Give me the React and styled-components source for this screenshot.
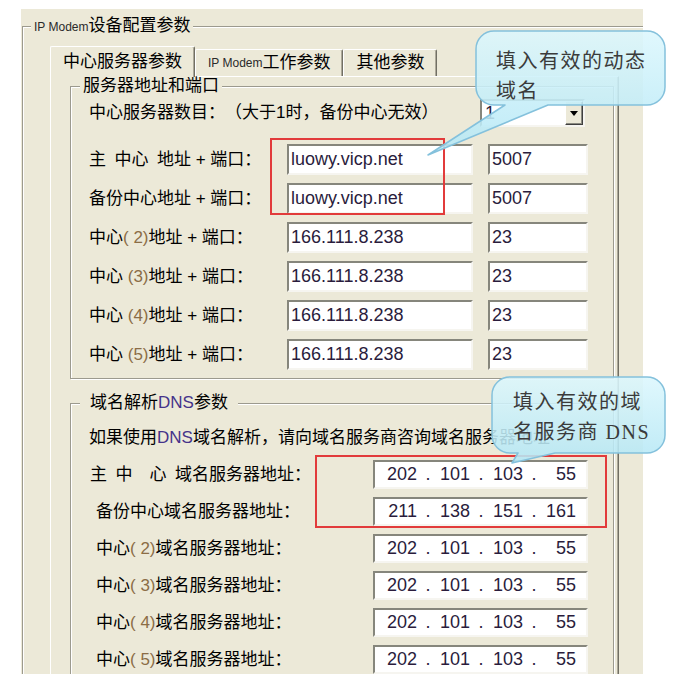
import React from "react";
import styled, { createGlobalStyle } from "styled-components";

const GlobalStyle = createGlobalStyle`
  html, body {
    margin: 0;
    padding: 0;
    background: #ffffff;
  }
  body {
    font-family: "Liberation Sans", "Noto Sans CJK SC", sans-serif;
    color: #000;
    text-spacing-trim: space-all;
  }
  * {
    box-sizing: border-box;
  }
`;

function Callout({ x, y, w, h, pl, pt, path, id, children }) {
  return (
    <Bubble $x={x} $y={y} $w={w} $h={h} $pl={pl} $pt={pt}>
      <svg width={w} height={h}>
        <defs>
          <linearGradient id={id} x1="0" y1="0" x2="0" y2="1">
            <stop offset="0" stopColor="#dcf7fd" />
            <stop offset="1" stopColor="#b4e7f5" />
          </linearGradient>
        </defs>
        <path
          d={path}
          fill={`url(#${id})`}
          fillOpacity="0.88"
          stroke="#84c1dc"
          strokeWidth="1.5"
          strokeLinejoin="round"
        />
      </svg>
      <BubbleText>{children}</BubbleText>
    </Bubble>
  );
}

export default function App() {
  const servers = [
    { label: <>主{"\u2002"}中心{"\u2002"}地址 + 端口：</>, host: "luowy.vicp.net", port: "5007" },
    { label: <>备份中心地址 + 端口：</>, host: "luowy.vicp.net", port: "5007" },
    { label: <>中心<Num>( 2)</Num>地址 + 端口：</>, host: "166.111.8.238", port: "23" },
    { label: <>中心 <Num>(3)</Num>地址 + 端口：</>, host: "166.111.8.238", port: "23" },
    { label: <>中心 <Num>(4)</Num>地址 + 端口：</>, host: "166.111.8.238", port: "23" },
    { label: <>中心 <Num>(5)</Num>地址 + 端口：</>, host: "166.111.8.238", port: "23" },
  ];

  const dnsRows = [
    { label: <>主{"\u2002"}中{"\u2003"}心{"\u2002"}域名服务器地址：</>, ip: ["202", "101", "103", "55"], indent: 1 },
    { label: <>备份中心域名服务器地址：</>, ip: ["211", "138", "151", "161"], indent: 7 },
    { label: <>中心<Num>( 2)</Num>域名服务器地址：</>, ip: ["202", "101", "103", "55"], indent: 7 },
    { label: <>中心<Num>( 3)</Num>域名服务器地址：</>, ip: ["202", "101", "103", "55"], indent: 7 },
    { label: <>中心<Num>( 4)</Num>域名服务器地址：</>, ip: ["202", "101", "103", "55"], indent: 7 },
    { label: <>中心<Num>( 5)</Num>域名服务器地址：</>, ip: ["202", "101", "103", "55"], indent: 7 },
  ];

  return (
    <>
      <GlobalStyle />
      <Page>
        <Panel>
          <OuterGroup>
            <OuterTitle>
              <Small>IP Modem</Small>设备配置参数
            </OuterTitle>
            <TabControl>
              <TabBar>
                <Tab $active>中心服务器参数</Tab>
                <Tab>
                  <Small>IP Modem</Small>工作参数
                </Tab>
                <Tab>其他参数</Tab>
              </TabBar>
              <TabPage>
                <Group $top={9}>
                  <GroupTitle $pad={3}>服务器地址和端口</GroupTitle>
                  <GroupBody $bottom={8}>
                    <CountRow>
                      <Label>中心服务器数目：（大于1时，备份中心无效）</Label>
                      <Combo>
                        <ComboValue>1</ComboValue>
                        <DropButton>
                          <svg width="8" height="5" viewBox="0 0 8 5">
                            <path d="M0 0 H8 L4 5 Z" fill="#000" />
                          </svg>
                        </DropButton>
                      </Combo>
                    </CountRow>
                    <RowList $top={17}>
                      {servers.map((s, index) => (
                        <ServerRow key={index}>
                          <Label>{s.label}</Label>
                          <Field>{s.host}</Field>
                          <Field>{s.port}</Field>
                        </ServerRow>
                      ))}
                    </RowList>
                  </GroupBody>
                </Group>

                <Group $top={24}>
                  <GroupTitle $pad={10}>
                    域名解析<Dns>DNS</Dns>参数
                  </GroupTitle>
                  <GroupBody $bottom={0}>
                    <Desc>
                      如果使用<Dns>DNS</Dns>域名解析，请向域名服务商咨询域名服务器地址
                    </Desc>
                    <RowList $top={12}>
                      {dnsRows.map((d, index) => (
                        <DnsRow key={index}>
                          <Label $indent={d.indent}>{d.label}</Label>
                          <IpField>
                            <Octet>{d.ip[0]}</Octet>
                            <Dot>.</Dot>
                            <Octet>{d.ip[1]}</Octet>
                            <Dot>.</Dot>
                            <Octet>{d.ip[2]}</Octet>
                            <Dot>.</Dot>
                            <Octet>{d.ip[3]}</Octet>
                          </IpField>
                        </DnsRow>
                      ))}
                    </RowList>
                  </GroupBody>
                </Group>
              </TabPage>
            </TabControl>
          </OuterGroup>
        </Panel>

        <Mark $x={270} $y={138} $w={175} $h={77} />
        <Mark $x={315} $y={455} $w={292} $h={73} />

        <Callout
          id="tip1"
          x={420}
          y={28}
          w={250}
          h={132}
          pl={76}
          pt={18}
          path="M74 3 H227 A18 18 0 0 1 245 21 V59 A18 18 0 0 1 227 77 H128 L8 127 L85 77 H74 A18 18 0 0 1 56 59 V21 A18 18 0 0 1 74 3 Z"
        >
          填入有效的动态
          <br />
          域名
        </Callout>
        <Callout
          id="tip2"
          x={490}
          y={372}
          w={180}
          h={95}
          pl={23}
          pt={15}
          path="M20 5 H157 A18 18 0 0 1 175 23 V63 A18 18 0 0 1 157 81 H65 L22 91 L28 81 H20 A18 18 0 0 1 2 63 V23 A18 18 0 0 1 20 5 Z"
        >
          填入有效的域
          <br />
          名服务商 DNS
        </Callout>
      </Page>
    </>
  );
}

const Page = styled.div`
  position: relative;
  width: 694px;
  height: 674px;
  overflow: hidden;
  padding: 9px 0 0 21px;
`;

const Panel = styled.div`
  width: 622px;
  height: 665px;
  overflow: hidden;
  background: #ece9d8;
  padding: 17px 0 0 1px;
`;

const OuterGroup = styled.div`
  height: 700px;
  border-top: 1px solid #9c9a8e;
  border-left: 1px solid #9c9a8e;
  box-shadow: inset 1px 1px 0 #fff;
`;

const OuterTitle = styled.div`
  width: fit-content;
  margin: -11px 0 0 8px;
  padding: 0 3px;
  background: #ece9d8;
  font-size: 17px;
  line-height: 20px;
  white-space: nowrap;
`;

const Small = styled.span`
  font-family: "Liberation Sans", sans-serif;
  font-size: 12px;
  color: #2a2a2a;
`;

const Num = styled.span`
  color: #8b6d46;
`;

const Dns = styled.span`
  color: #45338a;
`;

const TabControl = styled.div`
  width: 569px;
  margin: 9px 0 0 27px;
`;

const TabBar = styled.div`
  display: flex;
  align-items: flex-end;
  height: 30px;
`;

const Tab = styled.div`
  position: relative;
  z-index: ${(p) => (p.$active ? 2 : 0)};
  height: ${(p) => (p.$active ? "31px" : "27px")};
  margin-bottom: ${(p) => (p.$active ? "-1px" : "0")};
  padding: 0 12px ${(p) => (p.$active ? "1px" : "0")};
  display: flex;
  align-items: center;
  background: #ece9d8;
  border-top: 1px solid #fff;
  border-left: 1px solid #fff;
  border-right: 1px solid #716f64;
  border-radius: 2px 2px 0 0;
  box-shadow: inset -1px 0 0 #aca899;
  font-size: 17px;
  line-height: 20px;
  white-space: nowrap;
`;

const TabPage = styled.div`
  height: 620px;
  padding: 0 4px 0 19px;
  border-top: 1px solid #fff;
  border-left: 1px solid #fff;
  border-right: 1px solid #716f64;
  box-shadow: inset -1px 0 0 #aca899;
`;

const Group = styled.div`
  margin-top: ${(p) => p.$top}px;
  border: 1px solid #9c9a8e;
  box-shadow: inset 1px 1px 0 #fff, 1px 1px 0 #fff;
`;

const GroupTitle = styled.div`
  width: fit-content;
  margin: -10px 0 0 9px;
  padding: 0 ${(p) => p.$pad}px;
  background: #ece9d8;
  font-size: 17px;
  line-height: 18px;
  white-space: nowrap;
`;

const GroupBody = styled.div`
  padding: 0 25px ${(p) => p.$bottom}px 18px;
`;

const CountRow = styled.div`
  display: flex;
  justify-content: space-between;
  align-items: center;
  height: 28px;
  margin-top: 4px;
`;

const Label = styled.span`
  align-self: center;
  padding-left: ${(p) => p.$indent || 0}px;
  font-size: 17px;
  line-height: 20px;
  white-space: nowrap;
`;

const Desc = styled.div`
  margin-top: 16px;
  font-size: 17px;
  line-height: 20px;
  white-space: nowrap;
`;

const RowList = styled.div`
  display: flex;
  flex-direction: column;
  gap: 8px;
  margin-top: ${(p) => p.$top}px;
`;

const ServerRow = styled.div`
  display: grid;
  grid-template-columns: 183px 186px 100px;
  column-gap: 15px;
  height: 31px;
`;

const DnsRow = styled.div`
  display: grid;
  grid-template-columns: 284px 215px;
  height: 29px;
`;

const Field = styled.div`
  display: flex;
  align-items: center;
  padding-left: 2px;
  overflow: hidden;
  white-space: nowrap;
  background: #fff;
  border: 2px solid;
  border-color: #86867c #f6f5f0 #f6f5f0 #86867c;
  font-family: "Liberation Sans", sans-serif;
  font-size: 18px;
  color: #2a1c3c;
`;

const IpField = styled(Field)`
  display: grid;
  grid-template-columns: 31px 22px 31px 22px 31px 22px 31px;
  align-items: center;
  padding-left: 11px;
`;

const Octet = styled.span`
  text-align: right;
`;

const Dot = styled.span`
  text-align: center;
`;

const Combo = styled.div`
  display: flex;
  width: 105px;
  height: 28px;
  margin-right: 3px;
  background: #fff;
  border: 2px solid;
  border-color: #86867c #f6f5f0 #f6f5f0 #86867c;
`;

const ComboValue = styled.span`
  flex: 1;
  padding-left: 3px;
  font-family: "Liberation Sans", sans-serif;
  font-size: 18px;
  line-height: 24px;
  color: #2a1c3c;
`;

const DropButton = styled.span`
  width: 18px;
  display: flex;
  align-items: center;
  justify-content: center;
  background: #ece9d8;
  border: 1px solid;
  border-color: #fff #404040 #404040 #fff;
  box-shadow: inset -1px -1px 0 #8a8a80;
`;

const Mark = styled.div`
  position: absolute;
  left: ${(p) => p.$x}px;
  top: ${(p) => p.$y}px;
  width: ${(p) => p.$w}px;
  height: ${(p) => p.$h}px;
  border: 2px solid #e23b3b;
  pointer-events: none;
`;

const Bubble = styled.div`
  position: absolute;
  left: ${(p) => p.$x}px;
  top: ${(p) => p.$y}px;
  width: ${(p) => p.$w}px;
  height: ${(p) => p.$h}px;
  padding: ${(p) => p.$pt}px 0 0 ${(p) => p.$pl}px;
  font-family: "Liberation Serif", "Noto Sans CJK SC", serif;
  font-size: 20px;
  line-height: 30px;
  letter-spacing: 1.5px;
  color: #3b3b3b;
  white-space: nowrap;
  pointer-events: none;

  svg {
    position: absolute;
    left: 0;
    top: 0;
  }
`;

const BubbleText = styled.div`
  position: relative;
`;
